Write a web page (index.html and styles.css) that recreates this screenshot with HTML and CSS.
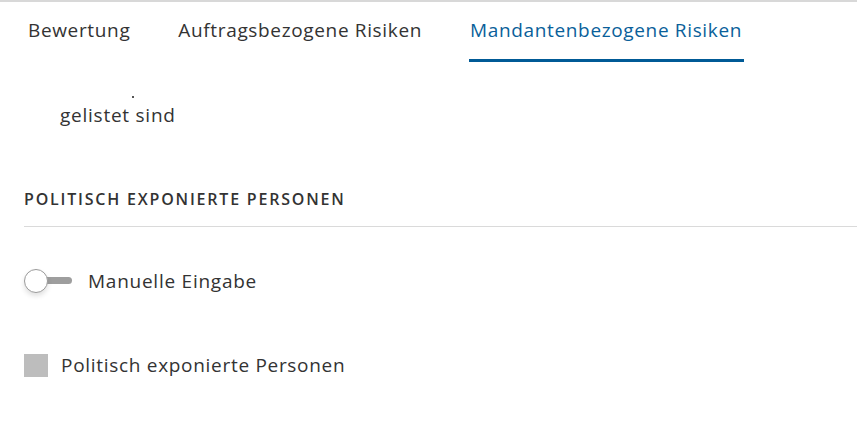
FILE: index.html
```html
<!DOCTYPE html>
<html lang="de">
<head>
<meta charset="utf-8">
<title>Mandantenbezogene Risiken</title>
<link rel="stylesheet" href="styles.css">
</head>
<body>
<div class="page">
  <nav class="tabs">
    <div class="tab">Bewertung</div>
    <div class="tab">Auftragsbezogene Risiken</div>
    <div class="tab active">Mandantenbezogene Risiken</div>
  </nav>
  <div class="content">
    <div class="cut-line"><span class="cut-dot"></span></div>
    <p class="list-tail">gelistet sind</p>
    <h2 class="section-title">Politisch exponierte Personen</h2>
    <div class="toggle-row">
      <span class="switch"><span class="track"></span><span class="knob"></span></span>
      <span class="toggle-label">Manuelle Eingabe</span>
    </div>
    <div class="check-row">
      <span class="checkbox"></span>
      <span class="check-label">Politisch exponierte Personen</span>
    </div>
  </div>
</div>
</body>
</html>
```
FILE: styles.css
```css
* { box-sizing: border-box; }
html, body { margin: 0; padding: 0; background: #fff; }
body {
  font-family: "Open Sans", "Noto Sans", sans-serif;
  color: #333;
  overflow: hidden;
}
.page {
  border-top: 2px solid #d8d8d8;
  width: 857px;
  height: 425px;
}
.tabs {
  display: flex;
  gap: 48px;
  padding-left: 28px;
  height: 60px;
}
.tab {
  font-size: 19px;
  line-height: 24px;
  padding-top: 16px;
  letter-spacing: 0.65px;
  color: #333;
}
.tab.active {
  color: #0a5f9a;
  border-bottom: 3px solid #005a96;
  margin: 0 -1px 0 -1px;
  padding-left: 1px;
  padding-right: 2px;
}
.content {
  padding-left: 24px;
}
.cut-line {
  height: 41px;
  position: relative;
}
.cut-dot {
  position: absolute;
  left: 108px;
  top: 34px;
  width: 2px;
  height: 2px;
  background: #555;
}
.list-tail {
  margin: 0;
  padding-left: 36px;
  font-size: 19px;
  letter-spacing: 0.75px;
  line-height: 24px;
}
.section-title {
  margin: 62px 0 0;
  font-size: 16px;
  font-weight: 600;
  letter-spacing: 1.8px;
  text-transform: uppercase;
  line-height: 20px;
  padding-bottom: 17px;
  border-bottom: 1px solid #dadada;
}
.toggle-row {
  display: flex;
  align-items: center;
  margin-top: 42px;
  height: 24px;
}
.switch {
  position: relative;
  width: 48px;
  height: 24px;
  flex: none;
}
.track {
  position: absolute;
  left: 12px;
  top: 8px;
  width: 36px;
  height: 7px;
  border-radius: 4px;
  background: #9e9e9e;
}
.knob {
  position: absolute;
  left: 0;
  top: 0;
  width: 24px;
  height: 24px;
  border-radius: 50%;
  background: #fff;
  border: 1px solid #9a9a9a;
  box-shadow: 0 3px 5px rgba(0,0,0,0.12);
}
.toggle-label {
  margin-left: 16px;
  font-size: 19px;
  letter-spacing: 0.75px;
}
.check-row {
  display: flex;
  align-items: center;
  margin-top: 59px;
}
.checkbox {
  width: 24px;
  height: 23px;
  background: #bdbdbd;
  flex: none;
}
.check-label {
  margin-left: 13px;
  font-size: 19px;
  letter-spacing: 0.7px;
}
```
